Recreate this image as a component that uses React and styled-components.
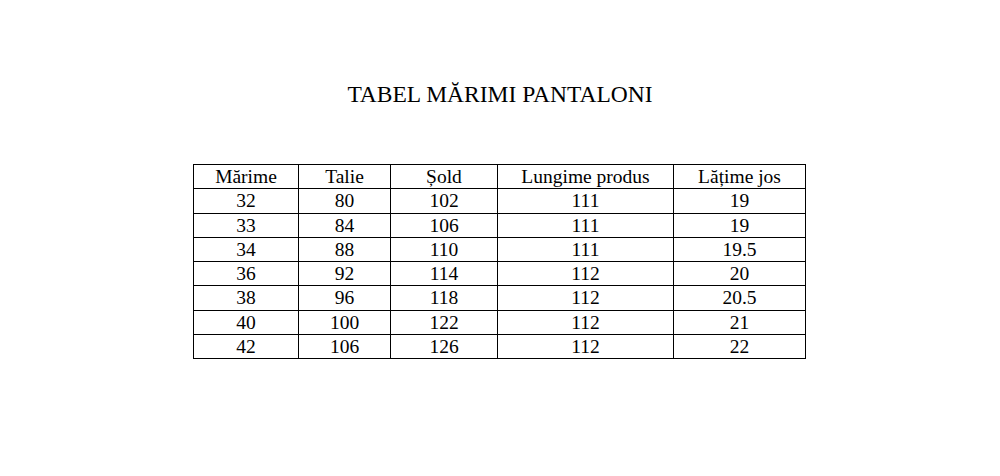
import React from "react";
import styled, { createGlobalStyle } from "styled-components";

const GlobalStyle = createGlobalStyle`
  html, body {
    margin: 0;
    padding: 0;
    background: #ffffff;
  }
  body {
    font-family: "Liberation Serif", "Times New Roman", serif;
    color: #000;
  }
`;

const columns = [
  { label: "Mărime", width: 105 },
  { label: "Talie", width: 92 },
  { label: "Șold", width: 107 },
  { label: "Lungime produs", width: 176 },
  { label: "Lățime jos", width: 132 },
];

const rows = [
  ["32", "80", "102", "111", "19"],
  ["33", "84", "106", "111", "19"],
  ["34", "88", "110", "111", "19.5"],
  ["36", "92", "114", "112", "20"],
  ["38", "96", "118", "112", "20.5"],
  ["40", "100", "122", "112", "21"],
  ["42", "106", "126", "112", "22"],
];

const App = () => {
  return (
    <Page>
      <GlobalStyle />
      <Title>TABEL MĂRIMI PANTALONI</Title>
      <Table>
        <colgroup>
          {columns.map((c) => (
            <col key={c.label} style={{ width: c.width }} />
          ))}
        </colgroup>
        <thead>
          <tr>
            {columns.map((c) => (
              <Cell as="th" key={c.label}>{c.label}</Cell>
            ))}
          </tr>
        </thead>
        <tbody>
          {rows.map((r) => (
            <tr key={r[0]}>
              {r.map((v, i) => (
                <Cell key={i}>{v}</Cell>
              ))}
            </tr>
          ))}
        </tbody>
      </Table>
    </Page>
  );
};

export default App;

const Page = styled.div`
  width: 1000px;
  height: 476px;
  display: flex;
  flex-direction: column;
  align-items: center;
  padding-top: 77px;
  box-sizing: border-box;
`;

const Title = styled.h1`
  margin: 0;
  font-family: "Liberation Serif", "Times New Roman", serif;
  font-weight: 400;
  font-size: 23.5px;
  line-height: 35px;
`;

const Table = styled.table`
  border-collapse: collapse;
  table-layout: fixed;
  width: 612px;
  margin-top: 52px;
  margin-left: -1px;
`;

const Cell = styled.td`
  border: 1px solid #000;
  padding: 0;
  height: 23.25px;
  font-family: "Liberation Serif", "Times New Roman", serif;
  font-weight: 400;
  font-size: 19.5px;
  line-height: 23px;
  text-align: center;
  white-space: nowrap;
`;
